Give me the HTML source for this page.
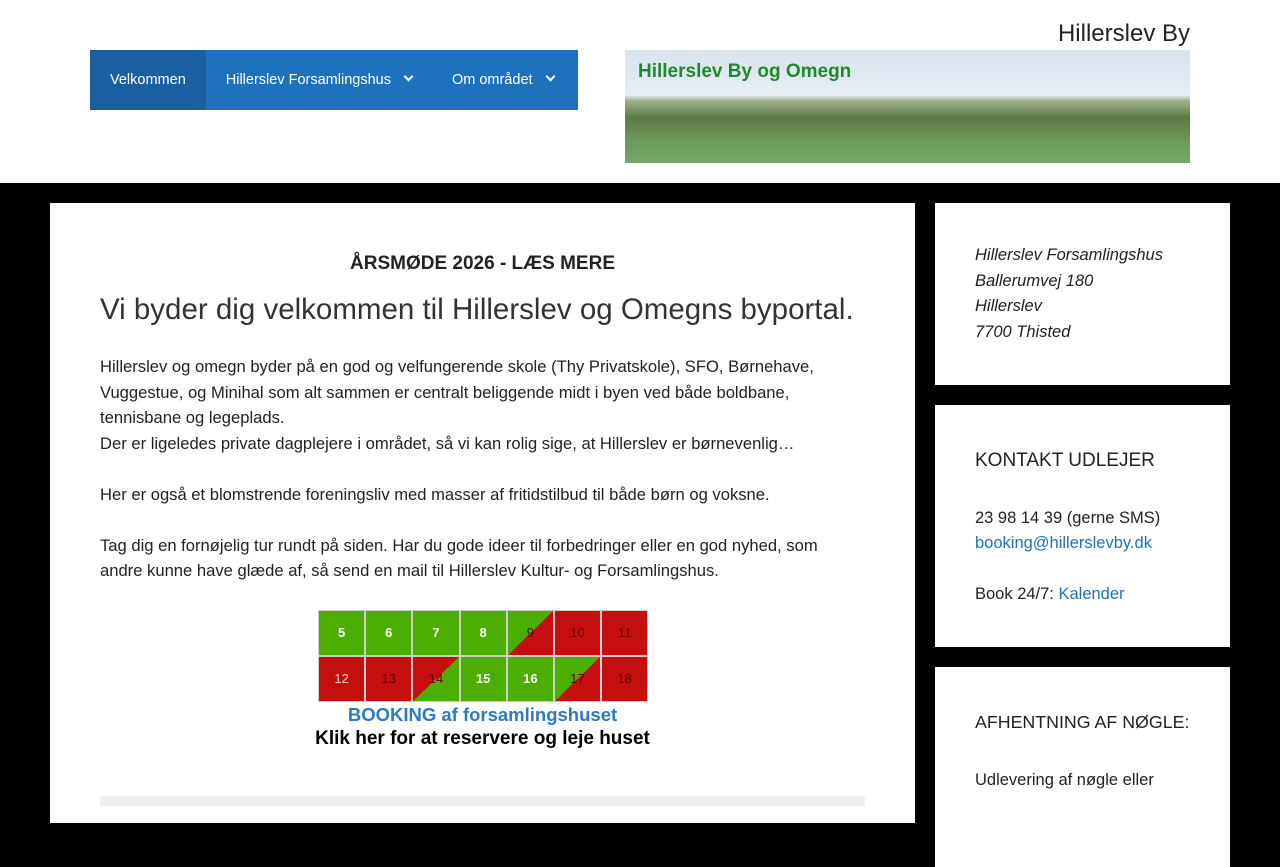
<!DOCTYPE html>
<html><head><meta charset="utf-8"><style>
*{box-sizing:border-box;margin:0;padding:0}
html,body{width:1280px;height:800px;overflow:hidden}
body{background:#000;font-family:"Liberation Sans",sans-serif;color:#222}
.hdr{position:absolute;left:0;top:0;width:1280px;height:183px;background:#fff}
.nav{position:absolute;left:90px;top:50px;width:488px;height:60px;background:#1e72bd;display:flex;font-size:14.5px;color:#fff}
.nav div{line-height:60px;padding:0 20px;white-space:nowrap}
.nav .act{background:#1b5fa3}
.nav span{display:inline-block;width:7px;height:7px;border-right:2px solid #fff;border-bottom:2px solid #fff;transform:rotate(45deg);margin-left:14px;position:relative;top:-4px}
.title{position:absolute;right:90px;top:20px;font-size:24px;color:#222}
.banner{position:absolute;left:625px;top:50px;width:565px;height:113px;overflow:hidden;background:linear-gradient(#d7e3ee 0,#e6edf4 40%,#9fb08a 45%,#5d7a44 60%,#6f8f55 75%,#6a9a5c 80%,#78a66a 100%)}
.banner b{position:absolute;left:13px;top:11px;font-size:19px;color:#1e8a2a}
.main{position:absolute;left:50px;top:203px;width:865px;height:620px;background:#fff}
.side{position:absolute;left:935px;width:295px;background:#fff;padding:40px;font-size:16.5px;line-height:25.5px}
h3{font-weight:normal;font-size:19px;white-space:nowrap}
a{color:#1e72bd;text-decoration:none}
.p{font-size:16.6px;line-height:25.5px}
.grid{position:absolute;left:268px;top:407px;display:grid;grid-template-columns:repeat(7,47.2px);grid-template-rows:46px 46px;gap:0}
.grid div{border:1px solid #ccc;font-size:13px;text-align:center;line-height:44px;color:#fff;font-weight:bold}
.g{background:#4caf00}.r{background:#c50f0f;color:#600 !important;font-weight:normal !important}
.gr{background:linear-gradient(to bottom right,#4caf00 50%,#c50f0f 50%);color:#600 !important;font-weight:normal !important}
.rg{background:linear-gradient(to bottom right,#c50f0f 50%,#4caf00 50%);color:#600 !important;font-weight:normal !important}
</style></head><body>
<div class="hdr">
<div class="nav"><div class="act">Velkommen</div><div>Hillerslev Forsamlingshus<span></span></div><div>Om området<span></span></div></div>
<div class="title">Hillerslev By</div>
<div class="banner"><b>Hillerslev By og Omegn</b></div>
</div>
<div class="main">
<div style="position:absolute;left:0;width:865px;top:50px;text-align:center;font-size:19px;font-weight:bold">ÅRSMØDE 2026 - LÆS MERE</div>
<div style="position:absolute;left:50px;top:90px;font-size:29.5px;color:#333;white-space:nowrap">Vi byder dig velkommen til Hillerslev og Omegns byportal.</div>
<div class="p" style="position:absolute;left:50px;top:151px;width:740px">Hillerslev og omegn byder på en god og velfungerende skole (Thy Privatskole), SFO, Børnehave, Vuggestue, og Minihal som alt sammen er centralt beliggende midt i byen ved både boldbane, tennisbane og legeplads.<br>Der er ligeledes private dagplejere i området, så vi kan rolig sige, at Hillerslev er børnevenlig…<br><br>Her er også et blomstrende foreningsliv med masser af fritidstilbud til både børn og voksne.<br><br>Tag dig en fornøjelig tur rundt på siden. Har du gode ideer til forbedringer eller en god nyhed, som andre kunne have glæde af, så send en mail til Hillerslev Kultur- og Forsamlingshus.</div>
<div class="grid">
<div class="g">5</div><div class="g">6</div><div class="g">7</div><div class="g">8</div><div class="gr">9</div><div class="r">10</div><div class="r">11</div>
<div class="r" style="color:#fcc!important">12</div><div class="r">13</div><div class="rg">14</div><div class="g">15</div><div class="g">16</div><div class="gr">17</div><div class="r">18</div>
</div>
<div style="position:absolute;left:0;width:865px;top:501px;text-align:center;font-size:18.5px;font-weight:bold;color:#2a7bc4">BOOKING af forsamlingshuset</div>
<div style="position:absolute;left:0;width:865px;top:525px;text-align:center;font-size:19px;font-weight:bold;color:#000">Klik her for at reservere og leje huset</div>
<div style="position:absolute;left:50px;top:593px;width:765px;height:10px;background:#eef1f4"></div>
</div>
<div class="side" style="top:203px;height:182px;font-style:italic">Hillerslev Forsamlingshus<br>Ballerumvej 180<br>Hillerslev<br>7700 Thisted</div>
<div class="side" style="top:405px;height:242px"><h3 style="margin-top:3px">KONTAKT UDLEJER</h3><div style="margin-top:32px">23 98 14 39 (gerne SMS)<br><a>booking@hillerslevby.dk</a><br><br>Book 24/7: <a>Kalender</a></div></div>
<div class="side" style="top:667px;height:200px"><h3 style="margin-top:3px;font-size:17.8px">AFHENTNING AF NØGLE:</h3><div style="margin-top:32px">Udlevering af nøgle eller</div></div>
</body></html>
